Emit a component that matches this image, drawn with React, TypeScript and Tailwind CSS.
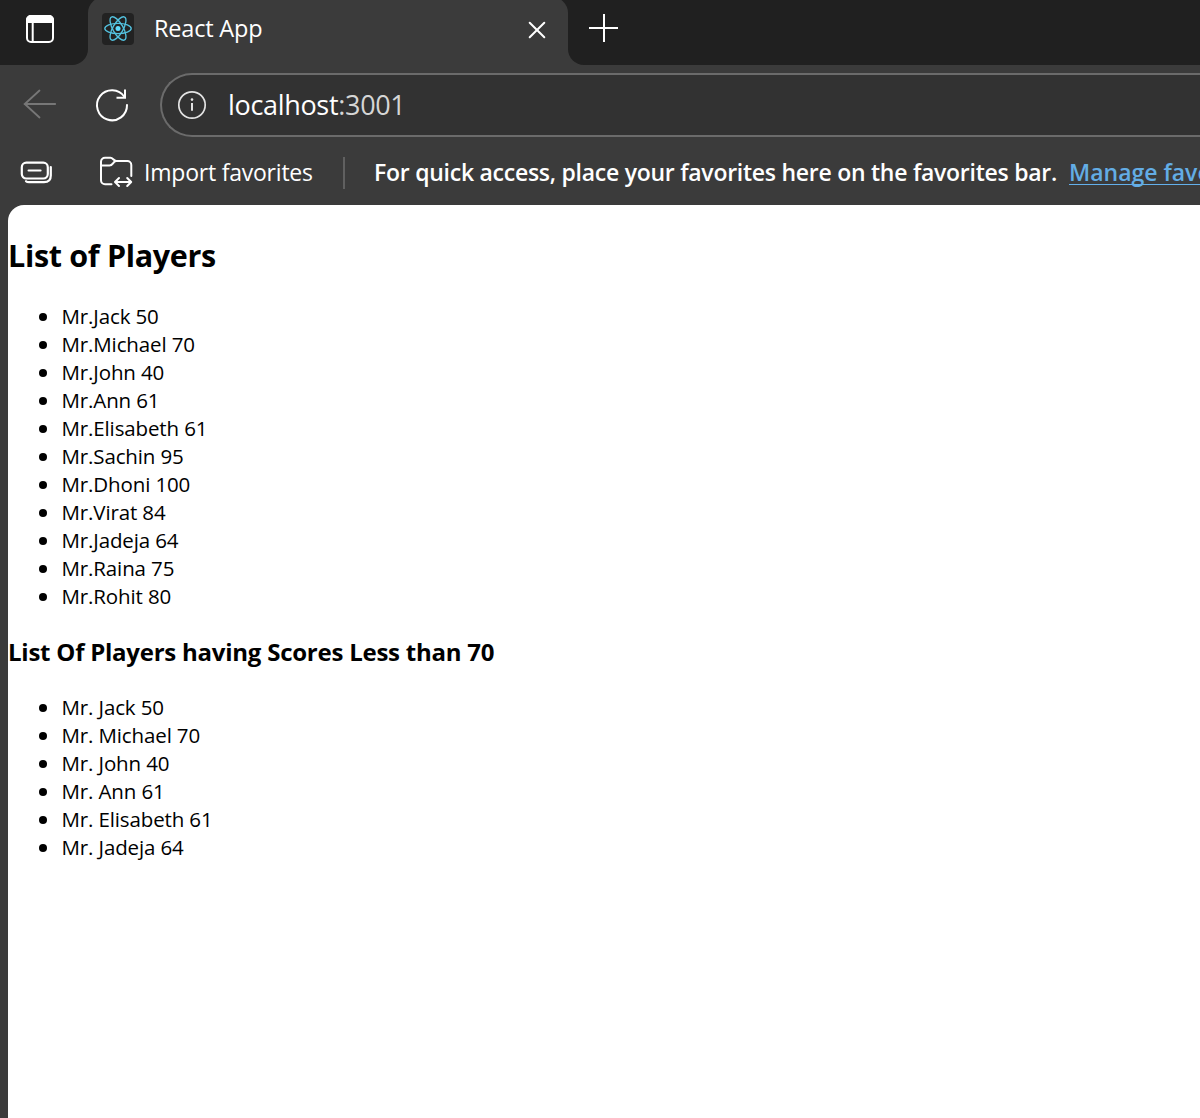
import type { ReactNode } from "react";

type Player = { name: string; score: number };

const players: Player[] = [
  { name: "Jack", score: 50 },
  { name: "Michael", score: 70 },
  { name: "John", score: 40 },
  { name: "Ann", score: 61 },
  { name: "Elisabeth", score: 61 },
  { name: "Sachin", score: 95 },
  { name: "Dhoni", score: 100 },
  { name: "Virat", score: 84 },
  { name: "Jadeja", score: 64 },
  { name: "Raina", score: 75 },
  { name: "Rohit", score: 80 },
];

const lowScorers = players.filter((p) => p.score <= 70);

function Icon({ size = 40, children, className = "" }: { size?: number; children: ReactNode; className?: string }) {
  return (
    <svg
      width={size}
      height={size}
      viewBox={`0 0 ${size} ${size}`}
      fill="none"
      stroke="currentColor"
      strokeWidth={2}
      strokeLinecap="round"
      strokeLinejoin="round"
      className={`shrink-0 ${className}`}
    >
      {children}
    </svg>
  );
}

function TabStrip() {
  return (
    <div className="flex h-[65px] bg-[#3b3b3b] text-white">
      <div className="w-[88px] rounded-br-2xl bg-[#202020] pl-5 pt-[9px]">
        <Icon>
          <rect x="7" y="7" width="26" height="26" rx="4" />
          <path d="M7 13V11a4 4 0 0 1 4-4H29a4 4 0 0 1 4 4V13Z" fill="currentColor" />
          <path d="M12.7 14V33" strokeLinecap="butt" />
        </Icon>
      </div>
      <div className="h-[65px] w-[480px] overflow-hidden bg-[#202020]">
        <div className="-mt-[3px] flex h-[68px] items-start rounded-t-2xl bg-[#3b3b3b] pl-[14px]">
          <div className="mt-4 size-8 shrink-0 rounded-[4px] bg-[#222]">
            <svg width="32" height="32" viewBox="0 0 32 32" fill="none" stroke="#53c1de" strokeWidth="1.35">
              <circle cx="16" cy="15.5" r="2.5" fill="#61dafb" stroke="none" />
              <ellipse cx="16" cy="15.5" rx="13.2" ry="5.1" />
              <ellipse cx="16" cy="15.5" rx="13.2" ry="5.1" transform="rotate(60 16 15.5)" />
              <ellipse cx="16" cy="15.5" rx="13.2" ry="5.1" transform="rotate(120 16 15.5)" />
            </svg>
          </div>
          <span className="ml-5 mt-[15px] flex-1 whitespace-nowrap text-[23.5px] leading-8 tracking-[-0.2px]">
            React App
          </span>
          <Icon className="mr-[11px] mt-[13px]">
            <path d="M12.7 12.7 27.3 27.3M27.3 12.7 12.7 27.3" />
          </Icon>
        </div>
      </div>
      <div className="flex-1 rounded-bl-2xl bg-[#202020] pl-4 pt-2">
        <Icon>
          <path d="M5 20H34M20 6V34" strokeLinecap="butt" />
        </Icon>
      </div>
    </div>
  );
}

function AddressRow() {
  return (
    <div className="flex h-[76px] items-start pt-2 text-white">
      <Icon className="ml-5 mt-[11px] text-[#777]">
        <path d="M4.5 20H35.2M19.5 6.5 4.8 20 19.5 33.5" strokeWidth={1.8} />
      </Icon>
      <Icon className="ml-8 mt-3">
        <path d="M35 20A15 15 0 1 1 32.5 12" />
        <path d="M33 5.5V12.7H25.5" strokeLinecap="square" strokeLinejoin="miter" />
      </Icon>
      <div className="ml-7 flex h-16 flex-1 items-center rounded-l-full border-2 border-r-0 border-[#6b6b6b] bg-[#323232] pl-[10px]">
        <Icon className="text-[#e3e3e3]">
          <circle cx="20" cy="20" r="13.2" strokeWidth={1.7} />
          <circle cx="20" cy="14.6" r="1.3" fill="currentColor" stroke="none" />
          <path d="M20 18V25.8" strokeLinecap="butt" />
        </Icon>
        <span className="ml-[16px] whitespace-nowrap text-[27px] leading-10 tracking-[-0.32px]">
          localhost<span className="text-[#d6d6d6]">:3001</span>
        </span>
      </div>
    </div>
  );
}

function FavoritesBar() {
  return (
    <div className="flex h-[62px] items-center overflow-hidden whitespace-nowrap text-[23px] leading-8 text-white">
      <Icon className="ml-4">
        <rect x="5.8" y="10.7" width="26" height="15.8" rx="4.5" strokeWidth={2.2} />
        <path d="M12.5 18.4H24.6" />
        <path d="M34.8 15V23.5Q34.8 30.2 28 30.2H13Q11 30.2 10 29.2" strokeWidth={2.2} />
      </Icon>
      <Icon className="ml-10">
        <path d="M15.5 32.3H9a4 4 0 0 1-4-4V9.7a4 4 0 0 1 4-4H14.5c2.5 0 3 3.3 6 3.3H31.3a4 4 0 0 1 4 4V24" />
        <path d="M5 13.5H13.5C17 13.5 16.8 9.7 20 9" />
        <path d="M19.5 30H35M23 26 19 30 23 34M31.2 26 35.2 30 31.2 34" />
      </Icon>
      <span className="ml-2 w-[199px] shrink-0 tracking-[-0.22px]">Import favorites</span>
      <div className="mt-px h-8 w-0.5 shrink-0 bg-[#606060]" />
      <span className="ml-[29px] w-[695px] shrink-0 font-semibold tracking-[-0.26px]">
        For quick access, place your favorites here on the favorites bar.
      </span>
      <a className="mt-0.5 shrink-0 border-b border-[#63b0ec] font-semibold leading-[23px] text-[#63ade5]">Manage favo</a>
    </div>
  );
}

function PlayerList({ items, prefix }: { items: Player[]; prefix: string }) {
  return (
    <ul className="text-[20.5px] leading-7 tracking-[-0.13px]">
      {items.map((p) => (
        <li key={p.name} className="flex h-7 items-center whitespace-pre pl-[31px]">
          <span className="mr-[14.5px] mt-0.5 size-2 rounded-full bg-black" />
          {`${prefix}${p.name} ${p.score}`}
        </li>
      ))}
    </ul>
  );
}

export default function App() {
  return (
    <div className="flex h-[1118px] flex-col overflow-hidden bg-[#3b3b3b] font-['Open_Sans','Noto_Sans',sans-serif]">
      <TabStrip />
      <AddressRow />
      <FavoritesBar />
      <main className="ml-2 mt-0.5 flex-1 rounded-tl-2xl bg-white pt-[29px] text-black">
        <h1 className="mb-[26px] text-[30.5px] font-bold leading-[42px] tracking-[-0.32px]">List of Players</h1>
        <PlayerList items={players} prefix="Mr." />
        <h3 className="mb-6 mt-[25px] text-[24px] font-bold leading-[34px] tracking-[-0.24px]">
          List Of Players having Scores Less than 70
        </h3>
        <PlayerList items={lowScorers} prefix="Mr. " />
      </main>
    </div>
  );
}
